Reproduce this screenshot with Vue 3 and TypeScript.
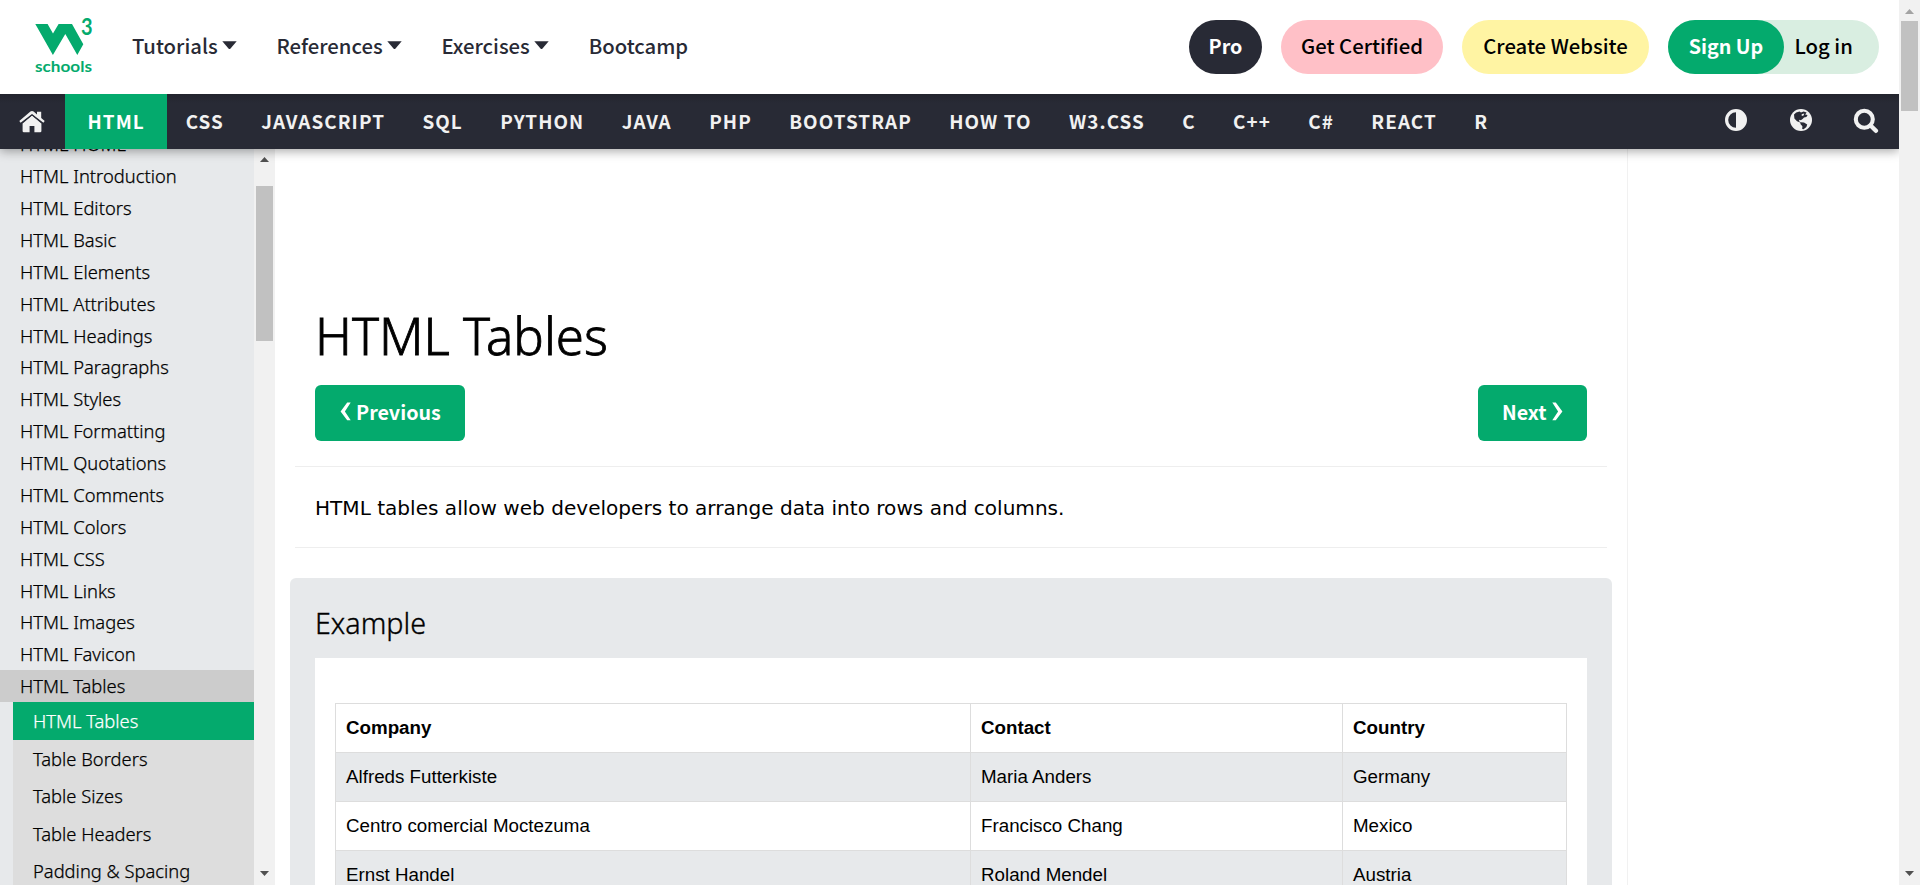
<script setup lang="ts">
interface MenuItem { label: string; caret: boolean }
interface Company { company: string; contact: string; country: string }

const menu: MenuItem[] = [
  { label: 'Tutorials', caret: true },
  { label: 'References', caret: true },
  { label: 'Exercises', caret: true },
  { label: 'Bootcamp', caret: false },
]

const topics: string[] = [
  'HTML', 'CSS', 'JAVASCRIPT', 'SQL', 'PYTHON', 'JAVA', 'PHP', 'BOOTSTRAP',
  'HOW TO', 'W3.CSS', 'C', 'C++', 'C#', 'REACT', 'R',
]

const chapters: string[] = [
  'HTML HOME', 'HTML Introduction', 'HTML Editors', 'HTML Basic', 'HTML Elements',
  'HTML Attributes', 'HTML Headings', 'HTML Paragraphs', 'HTML Styles', 'HTML Formatting',
  'HTML Quotations', 'HTML Comments', 'HTML Colors', 'HTML CSS', 'HTML Links',
  'HTML Images', 'HTML Favicon', 'HTML Tables',
]

const sections: string[] = ['HTML Tables', 'Table Borders', 'Table Sizes', 'Table Headers', 'Padding & Spacing']

const companies: Company[] = [
  { company: 'Alfreds Futterkiste', contact: 'Maria Anders', country: 'Germany' },
  { company: 'Centro comercial Moctezuma', contact: 'Francisco Chang', country: 'Mexico' },
  { company: 'Ernst Handel', contact: 'Roland Mendel', country: 'Austria' },
]
</script>

<template>
  <div class="window">
    <div class="page">
      <header class="header">
        <svg class="logo" width="64" height="72" viewBox="34 10 64 72">
          <path d="M35.3 24H47.6L53 33.6L58.6 24H72L83.3 44.3L77.3 55L65.3 34L52.9 55Z" />
          <text class="logo-three" x="80.9" y="34.5" textLength="11.6" lengthAdjust="spacingAndGlyphs">3</text>
          <text class="logo-name" x="35" y="71.6" textLength="57" lengthAdjust="spacingAndGlyphs">schools</text>
        </svg>
        <nav class="menu">
          <a v-for="item in menu" :key="item.label" class="menu-item">
            {{ item.label }}<svg v-if="item.caret" class="caret" width="15" height="9" viewBox="0 0 15 9"><path d="M0.3 0.3H14.7L8.3 7.7Q7.5 8.4 6.7 7.7Z" /></svg>
          </a>
        </nav>
        <div class="actions">
          <a class="pill pro">Pro</a>
          <a class="pill certified">Get Certified</a>
          <a class="pill website">Create Website</a>
          <div class="account">
            <a class="pill signup">Sign Up</a>
            <a class="login">Log in</a>
          </div>
        </div>
      </header>

      <nav class="topics">
        <a class="home">
          <svg width="26" height="22" viewBox="0 0 26 22">
            <path d="M13 4.6L22.4 12.6V20Q22.4 21.3 21.1 21.3H15.4V15H10.6V21.3H4.9Q3.6 21.3 3.6 20V12.6Z" />
            <path d="M13 0Q13.9 0 14.6 0.6L18 3.5V0.7H22.2V7.1L25.7 10.1L24.4 11.7L13 2.9L1.6 11.7L0.3 10.1L11.4 0.6Q12.1 0 13 0Z" />
            <path class="eave" d="M2.6 12.2L13 4L23.4 12.2" />
          </svg>
        </a>
        <a v-for="(topic, i) in topics" :key="topic" class="topic" :class="{ active: i === 0 }">{{ topic }}</a>
        <div class="tools">
          <svg width="24" height="24" viewBox="0 0 24 24">
            <path fill-rule="evenodd" d="M12 1A11 11 0 1 1 12 23A11 11 0 1 1 12 1ZM12 4.2A7.8 7.8 0 0 0 12 19.8Z" />
          </svg>
          <svg class="globe" width="24" height="24" viewBox="0 0 24 24">
            <circle cx="12" cy="12" r="11" />
            <path class="land" d="M5 6.6L7.2 4.4L10.6 3.6L12 4.6L14.6 3.5L17.6 4.6L16.2 6.6L18.6 7L17.4 9L15 9.4L13.6 11L11.8 12.2L10.6 11.8L9.8 13L11.6 14.2L15 14.6L18.2 16.4L17.4 19L14.6 21.2L13.2 21L13.4 18.2L11.6 16.2L11.2 14.6L8 13.2L5.4 10.6Z" />
            <path class="sea" d="M12.6 6.2L15.2 5.6L14.6 7.4L12.8 8Z" />
          </svg>
          <svg width="26" height="26" viewBox="0 0 26 26">
            <circle class="lens" cx="11.3" cy="11.2" r="8.5" />
            <path class="grip" d="M17.8 17.7L22.9 22.8" />
          </svg>
        </div>
      </nav>

      <div class="body">
        <aside class="sidebar">
          <div class="chapters">
            <a v-for="(chapter, i) in chapters" :key="chapter" class="chapter" :class="{ open: i === chapters.length - 1 }">{{ chapter }}</a>
            <div class="sections">
              <a v-for="(section, i) in sections" :key="section" class="section" :class="{ active: i === 0 }">{{ section }}</a>
            </div>
          </div>
          <div class="scrollbar side">
            <svg class="arrow" width="9" height="5" viewBox="0 0 9 5"><path d="M4.5 0L9 5H0Z" /></svg>
            <div class="thumb"></div>
            <svg class="arrow end" width="9" height="5" viewBox="0 0 9 5"><path d="M4.5 5L9 0H0Z" /></svg>
          </div>
        </aside>

        <main class="main">
          <h1>HTML Tables</h1>
          <div class="pager">
            <a class="button previous">
              <svg width="11" height="19" viewBox="0 0 11 19"><path d="M7.2 0.5H10.7L4.9 9.4L10.7 18.3H7.2L0.6 9.4Z" /></svg>Previous
            </a>
            <a class="button next">
              Next<svg width="11" height="19" viewBox="0 0 11 19"><path d="M3.8 0.5H0.3L6.1 9.4L0.3 18.3H3.8L10.4 9.4Z" /></svg>
            </a>
          </div>
          <hr>
          <p class="intro">HTML tables allow web developers to arrange data into rows and columns.</p>
          <hr>
          <section class="example">
            <h3>Example</h3>
            <div class="sheet">
              <table>
                <colgroup><col class="c1"><col class="c2"><col class="c3"></colgroup>
                <thead>
                  <tr><th>Company</th><th>Contact</th><th>Country</th></tr>
                </thead>
                <tbody>
                  <tr v-for="row in companies" :key="row.company">
                    <td>{{ row.company }}</td><td>{{ row.contact }}</td><td>{{ row.country }}</td>
                  </tr>
                </tbody>
              </table>
            </div>
          </section>
        </main>
      </div>
    </div>

    <div class="scrollbar outer">
      <svg class="arrow dim" width="9" height="5" viewBox="0 0 9 5"><path d="M4.5 0L9 5H0Z" /></svg>
      <div class="thumb"></div>
      <svg class="arrow end" width="9" height="5" viewBox="0 0 9 5"><path d="M4.5 5L9 0H0Z" /></svg>
    </div>
  </div>
</template>

<style>
body { overflow: hidden; background: #fff; }
</style>

<style scoped>
* { box-sizing: border-box; }

.window {
  display: flex;
  width: 1920px;
  height: 885px;
  overflow: hidden;
  color: #000;
  font-family: "Noto Sans", "Open Sans", sans-serif;
}
.page { display: flex; flex-direction: column; width: 1899px; height: 885px; }

.header {
  position: relative;
  z-index: 2;
  display: flex;
  align-items: center;
  flex: none;
  height: 94px;
  padding: 0 20px 0 34px;
  background: #fff;
  font: 500 20.3px "Noto Sans CJK SC", sans-serif;
}
.logo { flex: none; margin-bottom: 2px; fill: #04aa6d; overflow: visible; }
.logo-three { font: 700 22px Lato, sans-serif; }
.logo-name { font: 700 16px Lato, sans-serif; }
.menu { display: flex; gap: 39.3px; margin-left: 34px; line-height: 90px; height: 94px; color: #282a35; }
.caret { margin-left: 4.5px; vertical-align: 4px; fill: #282a35; }
.actions { display: flex; gap: 19px; margin-left: auto; line-height: 50px; text-align: center; }
.pill { display: block; height: 54px; border-radius: 27px; }
.pro { width: 73px; background: #282a35; color: #fff; font-weight: 700; font-size: 19.7px; line-height: 51px; }
.certified { width: 162px; background: #ffc0c7; }
.website { width: 187px; background: #fff4a3; }
.account { display: flex; width: 211px; border-radius: 27px; background: #d9eee1; }
.signup { width: 116px; background: #04aa6d; color: #fff; font-weight: 700; font-size: 19.7px; line-height: 51px; }
.login { padding-left: 10.5px; }

.topics {
  position: relative;
  z-index: 1;
  display: flex;
  flex: none;
  height: 55px;
  background: linear-gradient(#22242d, #282a35 9px);
  box-shadow: 0 2px 10px rgba(0, 0, 0, 0.36);
  color: #f1f1f1;
  fill: #f1f1f1;
  font: 700 18.85px/53px "Noto Sans CJK SC", sans-serif;
  letter-spacing: 1.08px;
}
.home { width: 65px; padding: 16.5px 0 0 19px; line-height: 0; }
.home .eave { fill: none; stroke: #282a35; stroke-width: 0.9; }
.topic { padding: 0 18.7px; white-space: nowrap; }
.topic.active { width: 102px; padding: 0 0 0 22.5px; background: #04aa6d; color: #fff; }
.tools { display: flex; gap: 41px; margin: 14px 20px 0 auto; }
.tools .globe { margin-right: -1px; }
.tools .land { fill: #282a35; }
.tools .lens { fill: none; stroke: #f1f1f1; stroke-width: 4.1; }
.tools .grip { stroke: #f1f1f1; stroke-width: 4.4; stroke-linecap: round; }

.body { display: flex; height: 736px; }
.sidebar { display: flex; flex: none; width: 275px; height: 736px; overflow: hidden; background: #e7e9eb; }
.chapters { width: 254px; margin-top: -20.7px; font-size: 18.35px; font-weight: 300; -webkit-text-stroke: 0.25px currentColor; }
.chapter { display: block; height: 31.875px; padding-left: 20px; line-height: 31.4px; }
.chapter.open { background: #ccc; }
.sections { margin-left: 13px; background: #ddd; }
.section { display: block; height: 37.5px; padding-left: 20px; line-height: 37.4px; }
.section.active { background: #04aa6d; color: #fff; }

.scrollbar {
  display: flex;
  flex: none;
  flex-direction: column;
  align-items: center;
  width: 21px;
  background: #f1f1f1;
}
.thumb { width: 17px; background: #c1c1c1; }
.arrow { flex: none; fill: #505050; }
.arrow.dim { fill: #a3a3a3; }
.arrow.end { margin-top: auto; margin-bottom: 9px; }
.side { padding-top: 8px; }
.side .thumb { height: 155px; margin-top: 24px; }
.outer { position: relative; z-index: 3; height: 885px; padding-top: 9px; }
.outer .thumb { height: 90px; margin-top: 7px; }

.main { width: 1353px; height: 736px; padding: 0 20px; overflow: hidden; border-right: 1px solid #f1f1f1; }
h1 { margin: 150px 0 0 20px; font-size: 51px; font-weight: 300; line-height: 72px; -webkit-text-stroke: 0.8px currentColor; }
.pager { display: flex; justify-content: space-between; margin: 14px 20px 25px; }
.button {
  display: flex;
  align-items: flex-start;
  gap: 5px;
  height: 56px;
  padding-left: 25px;
  border-radius: 6px;
  background: #04aa6d;
  color: #fff;
  fill: #fff;
  font: 700 19.7px/53px "Noto Sans CJK SC", sans-serif;
}
.previous { width: 150px; }
.next { width: 109px; padding-left: 24px; }
.button svg { margin-top: 17px; }
hr { height: 1px; margin: 0; border: 0; background: #eee; }
.intro { height: 80px; margin: 0 20px; font: 20.07px/83px "DejaVu Sans", sans-serif; }
.example { margin: 30px -5px 0; height: 400px; padding: 0 25px; border-radius: 6px; background: #e7e9eb; }
h3 { margin: 0; padding-top: 25px; height: 80px; font-size: 28.7px; font-weight: 300; line-height: 40px; -webkit-text-stroke: 0.35px currentColor; }
.sheet { height: 320px; padding: 45px 20px 0; background: #fff; }
table {
  width: 1231px;
  border-collapse: collapse;
  table-layout: fixed;
  font: 18.75px/24px "Liberation Sans", Arial, sans-serif;
}
.c1 { width: 635px; }
.c2 { width: 372px; }
.c3 { width: 224px; }
th, td { height: 49px; padding: 0 10px; border: 1px solid #ddd; text-align: left; }
tbody tr:nth-child(odd) { background: #e7e9eb; }
</style>
